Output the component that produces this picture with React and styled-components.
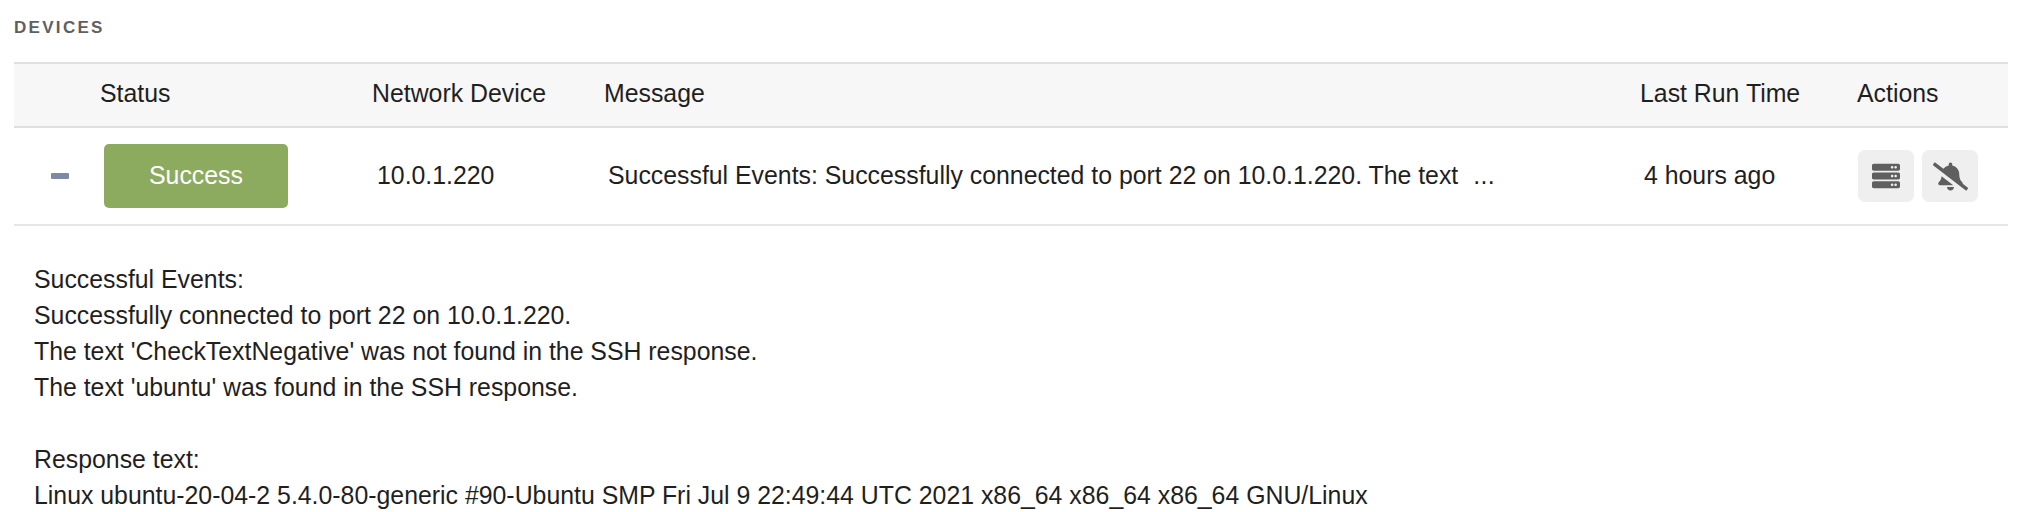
import { FaServer, FaBellSlash } from 'react-icons/fa';
import styled, { createGlobalStyle } from 'styled-components';

const GlobalStyle = createGlobalStyle`
    html, body {
        margin: 0;
        padding: 0;
        background: #fff;
        color: #1f1f1f;
        font-family: "Liberation Sans", Arial, sans-serif;
        font-size: 24.85px;
    }
`;

const columns = '86px 272px 232px 1036px 217px 151px';

const Page = styled.div`
    width: 2020px;
    height: 512px;
    overflow: hidden;
    padding: 18px 12px 0 14px;
    box-sizing: border-box;
`;

const SectionTitle = styled.h2`
    margin: 0 0 27px;
    height: 17px;
    line-height: 19px;
    font-size: 17px;
    font-weight: 700;
    letter-spacing: 2.3px;
    color: #5f5f5f;
`;

const HeaderRow = styled.div`
    display: grid;
    grid-template-columns: ${columns};
    align-items: center;
    height: 60px;
    padding-bottom: 2px;
    background: #f7f7f7;
    border-top: 2px solid #e0e0e0;
    border-bottom: 2px solid #e0e0e0;
`;

const HeaderCell = styled.div`
    white-space: nowrap;
`;

const DataRow = styled.div`
    display: grid;
    grid-template-columns: ${columns};
    align-items: center;
    height: 96px;
    border-bottom: 2px solid #e6e6e6;
`;

const DataCell = styled.div`
    padding-left: ${({ $inset = 4 }) => $inset}px;
    white-space: nowrap;
`;

const ToggleCell = styled.div`
    display: flex;
    padding-left: 37px;
`;

const CollapseBar = styled.span`
    display: block;
    width: 18px;
    height: 6px;
    border-radius: 1px;
    background: #7d8aa3;
`;

const StatusBadge = styled.div`
    display: flex;
    align-items: center;
    justify-content: center;
    width: 184px;
    height: 64px;
    border-radius: 5px;
    background: #8dab5f;
    color: #fff;
`;

const Ellipsis = styled.span`
    margin-left: 8px;
    letter-spacing: 0.4px;
`;

const Actions = styled.div`
    display: flex;
    gap: 8px;
    padding-left: 1px;
`;

const ActionButton = styled.button`
    display: flex;
    align-items: center;
    justify-content: center;
    width: 56px;
    height: 52px;
    padding: 0;
    border: 0;
    border-radius: 7px;
    background: #efefef;
    color: #5f5f5f;
    font-size: ${({ $iconSize }) => $iconSize}px;
`;

const Details = styled.div`
    padding: 36px 0 0 20px;
    line-height: 36px;
`;

const DetailLine = styled.div`
    min-height: 36px;
`;

const detailLines = [
    'Successful Events:',
    'Successfully connected to port 22 on 10.0.1.220.',
    "The text 'CheckTextNegative' was not found in the SSH response.",
    "The text 'ubuntu' was found in the SSH response.",
    '',
    'Response text:',
    'Linux ubuntu-20-04-2 5.4.0-80-generic #90-Ubuntu SMP Fri Jul 9 22:49:44 UTC 2021 x86_64 x86_64 x86_64 GNU/Linux',
];

const App = () => {
    return (
        <Page>
            <GlobalStyle />
            <SectionTitle>DEVICES</SectionTitle>
            <HeaderRow>
                <HeaderCell />
                <HeaderCell>Status</HeaderCell>
                <HeaderCell>Network Device</HeaderCell>
                <HeaderCell>Message</HeaderCell>
                <HeaderCell>Last Run Time</HeaderCell>
                <HeaderCell>Actions</HeaderCell>
            </HeaderRow>
            <DataRow>
                <ToggleCell>
                    <CollapseBar />
                </ToggleCell>
                <DataCell>
                    <StatusBadge>Success</StatusBadge>
                </DataCell>
                <DataCell $inset={5}>10.0.1.220</DataCell>
                <DataCell>
                    Successful Events: Successfully connected to port 22 on 10.0.1.220. The text&nbsp;
                    <Ellipsis>...</Ellipsis>
                </DataCell>
                <DataCell>4 hours ago</DataCell>
                <Actions>
                    <ActionButton $iconSize={28}>
                        <FaServer />
                    </ActionButton>
                    <ActionButton $iconSize={35}>
                        <FaBellSlash />
                    </ActionButton>
                </Actions>
            </DataRow>
            <Details>
                {detailLines.map((line, i) => (
                    <DetailLine key={i}>{line}</DetailLine>
                ))}
            </Details>
        </Page>
    );
};

export default App;
